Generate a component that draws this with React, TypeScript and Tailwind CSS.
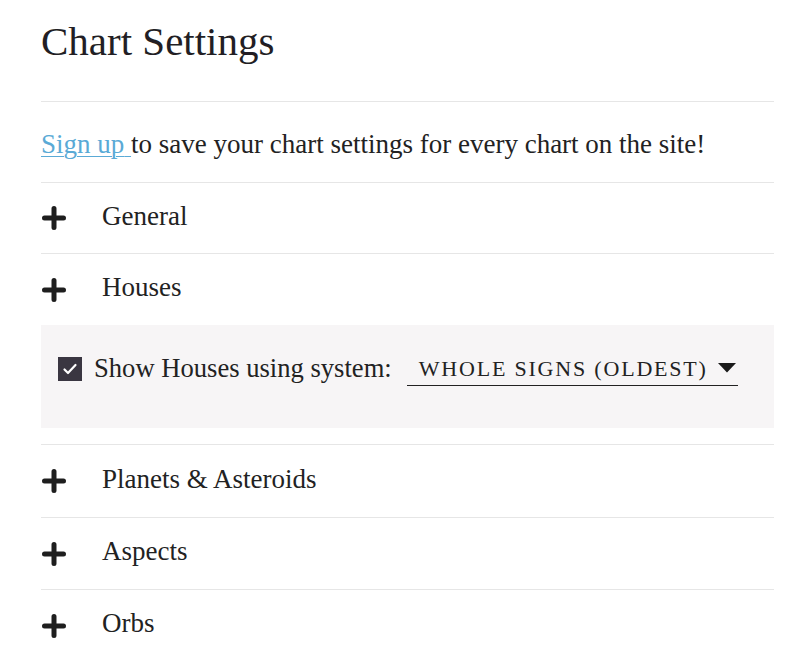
import React from "react";

const serif = { fontFamily: '"Liberation Serif", "Times New Roman", serif' };

function PlusIcon() {
    return (
        <svg width="24" height="24" viewBox="0 0 24 24" className="shrink-0">
            <path d="M12 2.5v19M2.5 12h19" stroke="#1e1e1e" strokeWidth="5" strokeLinecap="round" fill="none" />
        </svg>
    );
}

function SectionRow({ label, height }: { label: string; height: string }) {
    return (
        <div className={`flex items-center border-t border-[#e6e6e6] ${height}`}>
            <div className="ml-[1px]">
                <PlusIcon />
            </div>
            <span className="ml-[36px] pb-[5px] text-[27px] leading-[40px] text-[#222]">{label}</span>
        </div>
    );
}

export default function App() {
    return (
        <div className="min-h-screen bg-white" style={serif}>
            <div className="ml-[41px] w-[733px]">
                <h1 className="pt-[17px] text-[41px] leading-[48px] font-normal text-[#221e24]">Chart Settings</h1>

                <div className="mt-[36px] border-t border-[#e6e6e6] pt-[22px] pb-[18px]">
                    <p className="text-[27px] leading-[40px] text-[#222]">
                        <a href="#" className="text-[#5aaad6] underline decoration-1 underline-offset-[3px]">
                            Sign up{" "}
                        </a>
                        to save your chart settings for every chart on the site!
                    </p>
                </div>

                <SectionRow label="General" height="h-[71px]" />
                <SectionRow label="Houses" height="h-[72px]" />

                <div className="bg-[#f7f5f6] h-[103px] pl-[17px] pt-[24px]">
                    <div className="flex items-center h-[40px]">
                        <span className="flex items-center justify-center w-[24px] h-[24px] bg-[#3a3641]">
                            <svg width="18" height="18" viewBox="0 0 18 18">
                                <path d="M3.5 9.5l3.5 3.5 7.5-8" stroke="#fff" strokeWidth="2.2" fill="none" strokeLinecap="round" strokeLinejoin="round" />
                            </svg>
                        </span>
                        <span className="ml-[12px] pb-[3px] text-[26.6px] leading-[40px] text-[#222]">Show Houses using system:</span>
                        <div className="ml-[15px] flex items-center w-[331px] h-[34px] border-b border-[#222] pl-[12px] pr-[2px]">
                            <span className="flex-1 text-[22px] leading-[33px] tracking-[1.8px] text-[#222]">WHOLE SIGNS (OLDEST)</span>
                            <svg width="18" height="10" viewBox="0 0 18 10" className="mb-[1px]">
                                <path d="M0 0h18L9 9.5z" fill="#1a1a1a" />
                            </svg>
                        </div>
                    </div>
                </div>

                <div className="mt-[16px]">
                    <SectionRow label="Planets & Asteroids" height="h-[73px]" />
                    <SectionRow label="Aspects" height="h-[72px]" />
                    <SectionRow label="Orbs" height="h-[72px]" />
                </div>
            </div>
        </div>
    );
}
